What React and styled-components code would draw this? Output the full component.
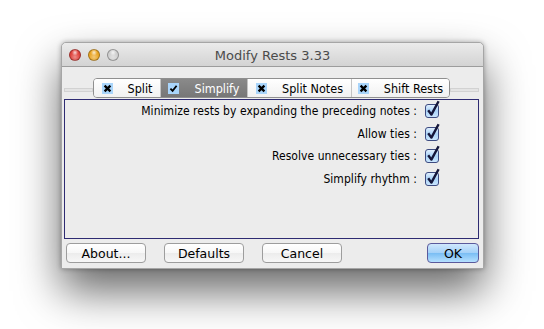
import React from "react";
import styled, { createGlobalStyle } from "styled-components";

const GlobalStyle = createGlobalStyle`
  html, body {
    margin: 0;
    padding: 0;
    background: #ffffff;
  }
  body {
    font-family: "Lucida Grande", "DejaVu Sans Condensed", "DejaVu Sans", sans-serif;
    font-size: 12px;
    color: #000;
  }
`;

const tabs = [
  { label: "Split", width: 66, checked: false },
  { label: "Simplify", width: 86, checked: true, active: true },
  { label: "Split Notes", width: 103, checked: false },
  { label: "Shift Rests", width: 97, checked: false },
];

const options = [
  "Minimize rests by expanding the preceding notes :",
  "Allow ties :",
  "Resolve unnecessary ties :",
  "Simplify rhythm :",
];

function TabMark({ checked }) {
  return (
    <StyledMark>
      <svg width="11" height="11" viewBox="0 0 11 11">
        {checked ? (
          <path d="M2.4 5.6 L4.6 7.8 L8.6 2.8" fill="none" stroke="#000" strokeWidth="1.8" />
        ) : (
          <path d="M2.6 2.6 L8.4 8.4 M8.4 2.6 L2.6 8.4" fill="none" stroke="#000" strokeWidth="2.3" />
        )}
      </svg>
    </StyledMark>
  );
}

function AquaCheck() {
  return (
    <svg width="16" height="19" viewBox="0 0 16 19">
      <defs>
        <linearGradient id="cb" x1="0" y1="0" x2="0" y2="1">
          <stop offset="0" stopColor="#e4f1ff" />
          <stop offset="0.5" stopColor="#a9d2f7" />
          <stop offset="1" stopColor="#cde8ff" />
        </linearGradient>
      </defs>
      <rect x="0.5" y="4.5" width="13" height="13" rx="2.5" fill="url(#cb)" stroke="#3d4b80" />
      <path d="M3.2 10.2 L6.4 14.6 L13.6 1.2" fill="none" stroke="#14163a" strokeWidth="2.4" strokeLinejoin="round" />
    </svg>
  );
}

export default function App() {
  return (
    <>
      <GlobalStyle />
      <StyledStage>
        <StyledWindow>
          <StyledTitleBar>
            <StyledLights>
              <StyledLight $color="#e0443e" />
              <StyledLight $color="#e9a524" />
              <StyledLight $color="#cfcfcf" />
            </StyledLights>
            <StyledTitle>Modify Rests 3.33</StyledTitle>
            <span />
          </StyledTitleBar>

          <StyledBody>
            <StyledTabRow>
              <StyledGroove />
              <StyledTabs>
                {tabs.map((t) => (
                  <StyledTab key={t.label} $width={t.width} $active={t.active}>
                    <TabMark checked={t.checked} />
                    {t.label}
                  </StyledTab>
                ))}
              </StyledTabs>
              <StyledGroove />
            </StyledTabRow>

            <StyledPanel>
              {options.map((o) => (
                <StyledOption key={o}>
                  <span>{o}</span>
                  <AquaCheck />
                </StyledOption>
              ))}
            </StyledPanel>

            <StyledButtons>
              <StyledButton>About...</StyledButton>
              <StyledButton>Defaults</StyledButton>
              <StyledButton>Cancel</StyledButton>
              <StyledSpacer />
              <StyledButton $primary>OK</StyledButton>
            </StyledButtons>
          </StyledBody>
        </StyledWindow>
      </StyledStage>
    </>
  );
}

const StyledStage = styled.div`
  width: 544px;
  height: 329px;
  padding: 42px 0 0 61px;
  box-sizing: border-box;
`;

const StyledWindow = styled.div`
  width: 423px;
  height: 227px;
  box-sizing: border-box;
  background: #ececec;
  border: 1px solid #a6a6a6;
  border-radius: 5px 5px 0 0;
  box-shadow: 0 22px 44px rgba(0, 0, 0, 0.6), 0 0 5px rgba(0, 0, 0, 0.3);
  display: flex;
  flex-direction: column;
  overflow: hidden;
`;

const StyledTitleBar = styled.div`
  height: 23px;
  display: grid;
  grid-template-columns: 1fr auto 1fr;
  align-items: center;
  background: linear-gradient(#ebebeb, #d3d3d3);
  border-bottom: 1px solid #9c9c9c;
  border-radius: 4px 4px 0 0;
`;

const StyledLights = styled.div`
  display: flex;
  gap: 7px;
  padding-left: 7px;
`;

const StyledLight = styled.span`
  width: 12px;
  height: 12px;
  border-radius: 50%;
  box-sizing: border-box;
  border: 1px solid rgba(0, 0, 0, 0.3);
  background: radial-gradient(circle at 50% 70%, #fff6 0, transparent 55%),
    radial-gradient(circle at 50% 25%, #ffffffcc 0, transparent 35%), ${(p) => p.$color};
`;

const StyledTitle = styled.div`
  font-family: "Lucida Grande", "DejaVu Sans", sans-serif;
  font-size: 13px;
  color: #4b4b4b;
  padding-top: 1px;
`;

const StyledBody = styled.div`
  flex: 1;
  display: flex;
  flex-direction: column;
  padding: 11px 4px 0 2px;
`;

const StyledTabRow = styled.div`
  display: flex;
  align-items: center;
  height: 20px;
  margin-bottom: 1px;
`;

const StyledGroove = styled.div`
  flex: 1;
  height: 2px;
  margin-top: 4px;
  border: 1px solid #d2d2d2;
  background: #e4e4e4;
`;

const StyledTabs = styled.div`
  display: flex;
  height: 20px;
  box-sizing: border-box;
  border: 1px solid #8f8f8f;
  border-radius: 4px;
  overflow: hidden;
`;

const StyledTab = styled.div`
  width: ${(p) => p.$width}px;
  display: flex;
  align-items: center;
  justify-content: center;
  gap: 15px;
  font-size: 12.5px;
  color: ${(p) => (p.$active ? "#ffffff" : "#000")};
  background: ${(p) => (p.$active ? "linear-gradient(#8a8a8a, #777777)" : "linear-gradient(#ffffff, #f1f1f1)")};
  & + & {
    border-left: 1px solid #c4c4c4;
  }
`;

const StyledMark = styled.span`
  width: 11px;
  height: 11px;
  background: #a9d5fb;
  display: flex;
`;

const StyledPanel = styled.div`
  height: 140px;
  box-sizing: border-box;
  border: 1px solid #2e2b72;
  display: flex;
  flex-direction: column;
  align-items: flex-end;
  gap: 3.5px;
  padding: 0 37px 0 0;
`;

const StyledOption = styled.div`
  display: flex;
  align-items: flex-end;
  gap: 8px;
  height: 19px;
  font-size: 12px;
  & > span {
    line-height: 14px;
    padding-bottom: 1px;
    letter-spacing: 0.05px;
  }
`;

const StyledButtons = styled.div`
  display: flex;
  gap: 18px;
  padding: 4px 0 0 2px;
`;

const StyledSpacer = styled.div`
  flex: 1;
`;

const StyledButton = styled.button`
  width: ${(p) => (p.$primary ? "52px" : "80px")};
  height: 20px;
  padding: 0;
  font-family: "Lucida Grande", "DejaVu Sans", sans-serif;
  font-size: 12.5px;
  color: #000;
  border-radius: 4px;
  border: 1px solid ${(p) => (p.$primary ? "#5b5a9c" : "#9d9d9d")};
  background: ${(p) =>
    p.$primary
      ? "linear-gradient(#d0e8fd, #a3d0f8 50%, #79bdf4 51%, #b5e0ff)"
      : "linear-gradient(#ffffff, #f7f7f7 50%, #ececec 51%, #f7f7f7)"};
`;
